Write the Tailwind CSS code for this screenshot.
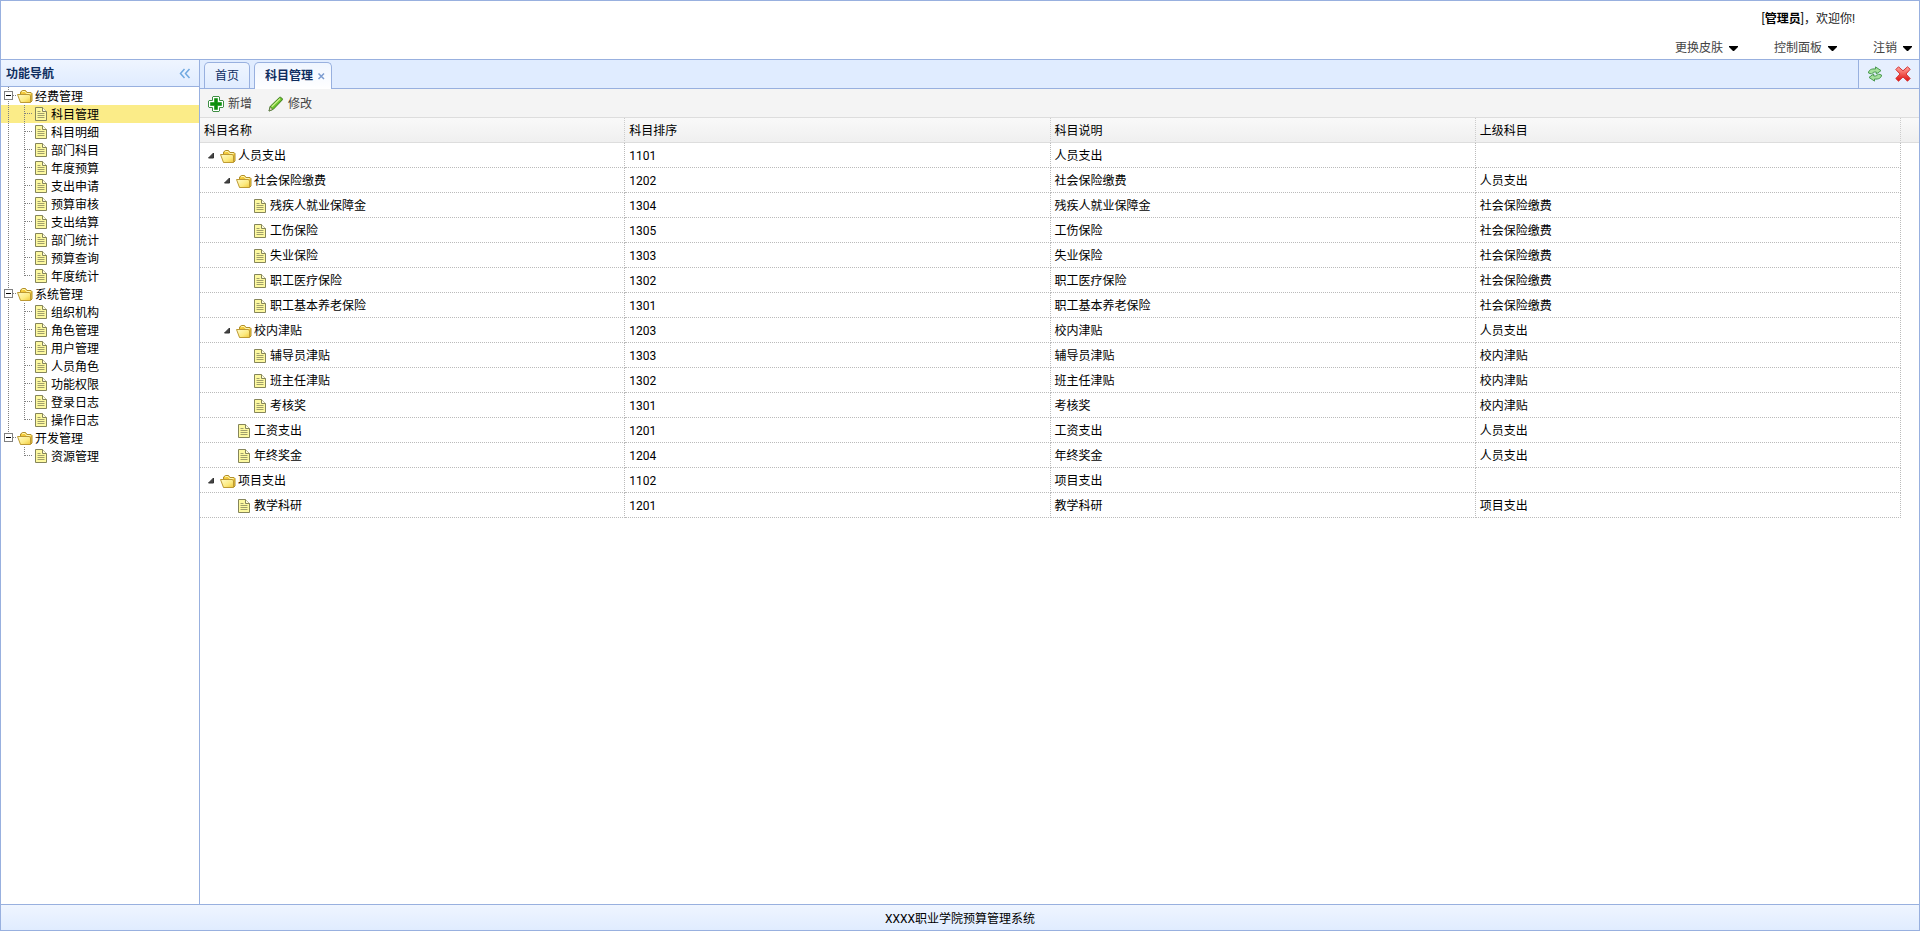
<!DOCTYPE html>
<html lang="zh-CN">
<head>
<meta charset="utf-8">
<title>XXXX职业学院预算管理系统</title>
<script src="https://cdn.jsdelivr.net/npm/@tailwindcss/browser@4"></script>
</head>
<body class="flex h-screen flex-col border border-[#98b0df] bg-white text-xs text-black [font-family:Roboto,'Noto_Sans_CJK_SC',sans-serif]">

<svg class="absolute size-0" aria-hidden="true">
  <defs>
    <linearGradient id="gFolder" x1="0" y1="0" x2="1" y2="1"><stop offset="0" stop-color="#fffbc8"/><stop offset=".6" stop-color="#fcea80"/><stop offset="1" stop-color="#f0c83a"/></linearGradient>
    <linearGradient id="gCross" x1="0" y1="0" x2="0" y2="1"><stop offset="0" stop-color="#ffa79e"/><stop offset=".45" stop-color="#f4625a"/><stop offset="1" stop-color="#dc1010"/></linearGradient>
    <symbol id="folder" viewBox="0 0 16 16">
      <path d="M3.500 7V4L5.500 2.500h3L10 4.500h4l1 1V13l-1.500 1.500H4z" fill="#f3c93a" stroke="#b08f2c"/>
      <path d="M5 4l1-.500h2L9.500 5.500h4" fill="none" stroke="#fff7b0"/>
      <path d="M.5 6.500h11.500l1.500 1v6.500l-.500.500H3.500z" fill="url(#gFolder)" stroke="#bd9a34"/>
    </symbol>
    <symbol id="file" viewBox="0 0 16 16">
      <path d="M2.500 1.500h7l4 4v9h-11z" fill="#fdf9a0" stroke="#85855a"/>
      <path d="M9.500 1.500v4h4" fill="#fffde0" stroke="#85855a"/>
      <path d="M4.500 5.500h3M4.500 7.500h7M4.500 9.500h7M4.500 11.500h7" stroke="#a09f6c" fill="none"/>
    </symbol>
  </defs>
</svg>

<header class="flex h-[59px] shrink-0 flex-col justify-between border-b border-[#98b0df]">
  <p class="mr-16 mt-2 self-end leading-5 text-[#222]">[<b class="text-black">管理员</b>]，欢迎你!</p>
  <nav class="mb-px mr-[7px] flex gap-9 self-end text-[#444]">
    <button class="flex items-center gap-1.5 leading-5">更换皮肤<svg class="h-[5px] w-[9px]" viewBox="0 0 9 5"><path d="M0 0h9v1L5 5H4L0 1z" fill="#000"/></svg></button>
    <button class="flex items-center gap-1.5 leading-5">控制面板<svg class="h-[5px] w-[9px]" viewBox="0 0 9 5"><path d="M0 0h9v1L5 5H4L0 1z" fill="#000"/></svg></button>
    <button class="flex items-center gap-1.5 leading-5">注销<svg class="h-[5px] w-[9px]" viewBox="0 0 9 5"><path d="M0 0h9v1L5 5H4L0 1z" fill="#000"/></svg></button>
  </nav>
</header>

<div class="flex min-h-0 flex-1">
  <aside class="flex w-[199px] shrink-0 flex-col border-r border-[#98b0df]">
    <div class="flex h-[27px] shrink-0 items-center justify-between border-b border-[#98b0df] bg-linear-to-b from-[#eff5ff] to-[#e0ecff] pl-[5px] pr-1.5 pt-0.5">
      <h2 class="font-bold leading-5 text-[#0e2d5f]">功能导航</h2>
      <button aria-label="收起导航"><svg class="size-4" viewBox="0 0 16 16" fill="none" stroke="#6fa8e0" stroke-width="1.500"><path d="M7.500 3L3.500 7.500l4 4.500M12.500 3l-4 4.500 4 4.500"/></svg></button>
    </div>
    <ul id="nav" class="flex-1 overflow-auto"></ul>
  </aside>

  <main class="flex min-w-0 flex-1 flex-col">
    <div class="flex h-[29px] shrink-0 justify-between border-b border-[#98b0df] bg-[#e0ecff]">
      <div class="flex gap-1 pl-1 pt-0.5" role="tablist">
        <button role="tab" class="h-[26px] rounded-t-[5px] border border-b-0 border-[#98b0df] bg-linear-to-b from-[#eff5ff] to-[#e0ecff] px-2.5 text-[#0e2d5f]">首页</button>
        <div class="flex h-[27px] items-center gap-1 rounded-t-[5px] border border-b-0 border-[#98b0df] bg-linear-to-b from-[#eff5ff] to-white pl-2.5 pr-[5px]">
          <button role="tab" aria-selected="true" class="font-bold text-[#0e2d5f]">科目管理</button>
          <button aria-label="关闭标签"><svg class="size-[9px]" viewBox="0 0 9 9" stroke="#7a9bd0" stroke-width="1.500"><path d="M1.500 1.500L7 7M7 1.500L1.500 7"/></svg></button>
        </div>
      </div>
      <div class="flex items-center gap-3 border-l border-[#98b0df] bg-[#e6effe] px-2">
        <button aria-label="刷新"><svg class="size-4" viewBox="0 0 16 16" stroke-linejoin="round"><path d="M1.500 7C1.500 4 4.500 2.500 8.500 3V.9L14 4.600 9.300 8V6C6.500 5.600 5.500 7 4.500 8z" fill="#a5e09c" stroke="#4a9a50"/><path d="M14.500 9c0 3-3 4.500-7 4v2.100L2 11.400 6.700 8v2c2.800.4 3.800-1 4.800-2z" fill="#a5e09c" stroke="#4a9a50"/></svg></button>
        <button aria-label="关闭"><svg class="size-4" viewBox="0 0 16 16"><path d="M3.500.8L8 4.800 12.500.8l2.700 2.500L11 8l4.200 4.500-2.700 2.700L8 11l-4.500 4.200-2.700-2.700L5 8 .8 3.500z" fill="url(#gCross)" stroke="#d43434" stroke-linejoin="round"/></svg></button>
      </div>
    </div>

    <div class="flex h-[29px] shrink-0 items-center gap-4 border-b border-[#ddd] bg-[#f4f4f4] px-2 pt-0.5 text-[#444]">
      <button class="flex items-center gap-1 leading-5"><svg class="size-4" viewBox="0 0 16 16"><path d="M5 .5h6l.500.500v3.500H15l.500.500v6l-.500.500h-3.500V15l-.500.500H5l-.500-.500v-3.500H1l-.500-.500V5L1 4.500h3.500V1z" fill="#fff" stroke="#3f8f45"/><path d="M6.500 2.500h3v4h4v3h-4v4h-3v-4h-4v-3h4z" fill="#0c8f0c" stroke="#0c8f0c" stroke-width=".6"/></svg>新增</button>
      <button class="flex items-center gap-1 leading-5"><svg class="size-4" viewBox="0 0 16 16"><path d="M1 15l1.300-4.700L11.500 1.400c1-.8 3.600 1.200 2.800 2.500L5.300 13.300z" fill="#6cc62c" stroke="#3d7a1e"/><path d="M3.700 10.800L12 2.700" stroke="#c8f08c" stroke-width="1.300"/><path d="M1 15l1.300-4.200 2.300 2.600z" fill="#e9e4c0" stroke="#4a5a34" stroke-width=".6"/></svg>修改</button>
    </div>

    <div class="min-h-0 flex-1 overflow-auto">
      <table class="w-full table-fixed border-separate border-spacing-0">
        <colgroup><col><col><col><col><col class="w-[18px]"></colgroup>
        <thead class="bg-linear-to-b from-[#f9f9f9] to-[#efefef] text-left">
          <tr class="h-[25px]">
            <th scope="col" class="border-b border-r border-b-[#ddd] border-r-[#ccc] [border-right-style:dotted] px-1 pb-0 pt-0.5 font-normal">科目名称</th>
            <th scope="col" class="border-b border-r border-b-[#ddd] border-r-[#ccc] [border-right-style:dotted] px-1 pb-0 pt-0.5 font-normal">科目排序</th>
            <th scope="col" class="border-b border-r border-b-[#ddd] border-r-[#ccc] [border-right-style:dotted] px-1 pb-0 pt-0.5 font-normal">科目说明</th>
            <th scope="col" class="border-b border-r border-b-[#ddd] border-r-[#ccc] [border-right-style:dotted] px-1 pb-0 pt-0.5 font-normal">上级科目</th>
            <td class="border-b border-[#ddd]"></td>
          </tr>
        </thead>
        <tbody id="rows"></tbody>
      </table>
    </div>
  </main>
</div>

<footer class="flex h-[26px] shrink-0 items-center justify-center border-t border-[#98b0df] bg-linear-to-b from-[#eff5ff] to-[#e0ecff] pt-0.5">XXXX职业学院预算管理系统</footer>

<script>
const icon = name => `<svg class="mr-0.5 size-4 shrink-0" aria-hidden="true"><use href="#${name}"/></svg>`;

const menu = [
  ['经费管理', ['科目管理', '科目明细', '部门科目', '年度预算', '支出申请', '预算审核', '支出结算', '部门统计', '预算查询', '年度统计']],
  ['系统管理', ['组织机构', '角色管理', '用户管理', '人员角色', '功能权限', '登录日志', '操作日志']],
  ['开发管理', ['资源管理']]
];
const down = '<path d="M7.500 0v18" stroke="#808080" stroke-dasharray="1 1"/>';
const right = '<path d="M8 8.500h8" stroke="#808080" stroke-dasharray="1 1"/>';
const half = '<path d="M7.500 0v9" stroke="#808080" stroke-dasharray="1 1"/>';
const line = body => `<svg class="h-[18px] w-4 shrink-0" viewBox="0 0 16 18" aria-hidden="true">${body}</svg>`;
const box = '<rect x="3.500" y="4.500" width="8" height="8" fill="#fff" stroke="#808080"/><path d="M5 8.500h5" stroke="#000"/>';

document.getElementById('nav').innerHTML = menu.map(([group, items], g) => {
  const lastGroup = g === menu.length - 1;
  return `<li><div class="flex h-[18px] items-center"><button aria-label="折叠">${line((lastGroup ? half : down) + right + box)}</button>${icon('folder')}<span class="pt-0.5">${group}</span></div><ul>` +
    items.map((t, i) => `<li class="flex h-[18px] items-center ${t === '科目管理' ? 'bg-[#fbec88]' : ''}">${line(lastGroup ? '' : down)}${line((i === items.length - 1 ? half : down) + right)}${icon('file')}<a href="#" class="pt-0.5">${t}</a></li>`).join('') +
    '</ul></li>';
}).join('');

const subjects = [
  [0, 1, '人员支出', '1101', ''],
  [1, 1, '社会保险缴费', '1202', '人员支出'],
  [2, 0, '残疾人就业保障金', '1304', '社会保险缴费'],
  [2, 0, '工伤保险', '1305', '社会保险缴费'],
  [2, 0, '失业保险', '1303', '社会保险缴费'],
  [2, 0, '职工医疗保险', '1302', '社会保险缴费'],
  [2, 0, '职工基本养老保险', '1301', '社会保险缴费'],
  [1, 1, '校内津贴', '1203', '人员支出'],
  [2, 0, '辅导员津贴', '1303', '校内津贴'],
  [2, 0, '班主任津贴', '1302', '校内津贴'],
  [2, 0, '考核奖', '1301', '校内津贴'],
  [1, 0, '工资支出', '1201', '人员支出'],
  [1, 0, '年终奖金', '1204', '人员支出'],
  [0, 1, '项目支出', '1102', ''],
  [1, 0, '教学科研', '1201', '项目支出']
];
const cell = t => `<td class="border-b border-r border-dotted border-[#bbb] px-1 pb-0 pt-0.5">${t}</td>`;
const arrow = '<button class="size-4 shrink-0" aria-label="折叠"><svg class="size-4" viewBox="0 0 16 16"><path d="M9.500 5v5h-5z" fill="#444" stroke="#333"/></svg></button>';
document.getElementById('rows').innerHTML = subjects.map(([depth, open, name, order, parent]) =>
  `<tr class="h-[25px]">${cell(`<div class="flex items-center">${'<span class="w-4 shrink-0"></span>'.repeat(depth)}${open ? arrow : '<span class="w-4 shrink-0"></span>'}${icon(open ? 'folder' : 'file')}<span>${name}</span></div>`)}${cell(order)}${cell(name)}${cell(parent)}<td></td></tr>`
).join('');
</script>
</body>
</html>
